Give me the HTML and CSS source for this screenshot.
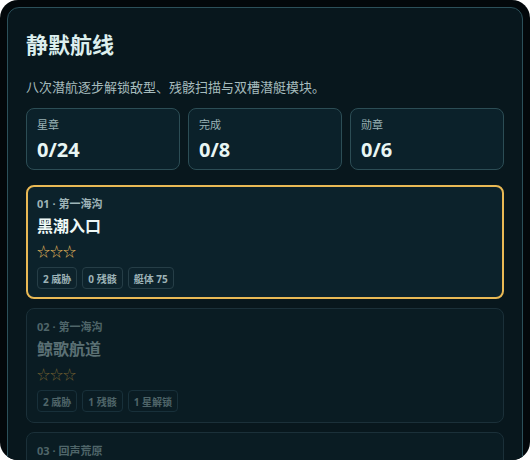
FILE: index.html
```html
<!DOCTYPE html>
<html lang="zh">
<head>
<meta charset="utf-8">
<title>静默航线</title>
<link rel="stylesheet" href="styles.css">
</head>
<body>
<div class="frame">
  <main class="panel">
    <h1 class="title">静默航线</h1>
    <p class="subtitle">八次潜航逐步解锁敌型、残骸扫描与双槽潜艇模块。</p>
    <section class="stats">
      <div class="stat"><div class="stat-label">星章</div><div class="stat-value">0/24</div></div>
      <div class="stat"><div class="stat-label">完成</div><div class="stat-value">0/8</div></div>
      <div class="stat"><div class="stat-label">勋章</div><div class="stat-value">0/6</div></div>
    </section>
    <section class="levels">
      <article class="level selected">
        <div class="level-meta">01 · 第一海沟</div>
        <div class="level-name">黑潮入口</div>
        <div class="level-stars">☆☆☆</div>
        <div class="tags"><span class="tag">2 威胁</span><span class="tag">0 残骸</span><span class="tag">艇体 75</span></div>
      </article>
      <article class="level locked">
        <div class="level-meta">02 · 第一海沟</div>
        <div class="level-name">鲸歌航道</div>
        <div class="level-stars">☆☆☆</div>
        <div class="tags"><span class="tag">2 威胁</span><span class="tag">1 残骸</span><span class="tag">1 星解锁</span></div>
      </article>
      <article class="level locked">
        <div class="level-meta">03 · 回声荒原</div>
        <div class="level-name">回声荒原</div>
        <div class="level-stars">☆☆☆</div>
        <div class="tags"><span class="tag">3 威胁</span></div>
      </article>
    </section>
  </main>
</div>
</body>
</html>
```
FILE: styles.css
```css
html, body {
  margin: 0;
  padding: 0;
  background: #ffffff;
}
body {
  font-family: "Segoe UI", "Noto Sans", "Noto Sans CJK SC", sans-serif;
}
.frame {
  width: 530px;
  height: 460px;
  box-sizing: border-box;
  padding: 7px 7px 0;
  background: #03080b;
  border-radius: 18px;
  overflow: hidden;
}
.panel {
  box-sizing: border-box;
  height: 520px;
  background: #08171d;
  border: 1px solid #2c505a;
  border-radius: 12px;
  padding: 22px 18px 0;
}
.title {
  margin: 0;
  font-size: 22px;
  line-height: 28px;
  font-weight: 700;
  color: #dcefee;
}
.subtitle {
  margin: 19px 0 0;
  font-size: 13px;
  line-height: 20px;
  color: #a6bcbe;
}
.stats {
  margin-top: 11px;
  display: grid;
  grid-template-columns: repeat(3, 1fr);
  gap: 8px;
}
.stat {
  background: #0b212a;
  border: 1px solid #2c4d55;
  border-radius: 8px;
  padding: 8px 10px 7px;
}
.stat-label {
  font-size: 11px;
  line-height: 16px;
  color: #9ab2b5;
}
.stat-value {
  margin-top: 5px;
  font-size: 20px;
  line-height: 24px;
  font-weight: 700;
  color: #e8f6f4;
}
.levels {
  margin-top: 15px;
  display: flex;
  flex-direction: column;
  gap: 9px;
}
.level {
  background: #0c222b;
  border: 1px solid #1d363f;
  border-radius: 8px;
  padding: 10px 10px 10px;
}
.level.selected {
  border: 2px solid #e9b955;
  padding: 9px 9px 8px;
}
.level.locked {
  background: #0a1c23;
  border-color: #1b3039;
}
.level-meta {
  font-size: 11px;
  line-height: 16px;
  font-weight: 700;
  color: #9fb4b8;
}
.level-name {
  margin-top: 3px;
  font-size: 16px;
  line-height: 22px;
  font-weight: 700;
  color: #eef8f6;
}
.level-stars {
  margin-top: 4px;
  font-family: "Noto Sans CJK SC", sans-serif;
  font-size: 13px;
  line-height: 20px;
  color: #e0b55a;
  letter-spacing: 0;
}
.tags {
  margin-top: 6px;
  display: flex;
  gap: 5px;
}
.tag {
  box-sizing: border-box;
  height: 22px;
  padding: 0 5px;
  display: flex;
  align-items: center;
  font-size: 10px;
  font-weight: 700;
  color: #9db3b7;
  border: 1px solid #263e47;
  border-radius: 4px;
  background: #0d232c;
}
.level.locked .level-meta,
.level.locked .level-name,
.level.locked .tag {
  color: #4f6569;
}
.level.locked .level-name {
  color: #5b7074;
}
.level.locked .level-stars {
  color: #6e5c30;
}
.level.locked .tag {
  border-color: #18303a;
  background: #0a1c23;
}
```
